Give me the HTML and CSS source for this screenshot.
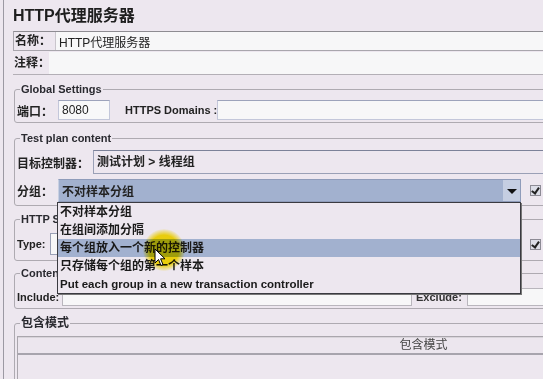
FILE: index.html
```html
<!DOCTYPE html>
<html lang="zh-CN">
<head>
    <meta charset="UTF-8">
    <title>HTTP代理服务器</title>
    <link rel="stylesheet" href="styles.css">
</head>
<body>
    <div class="window">
        <div class="editor">
            <h1 class="editor-title">HTTP代理服务器</h1>

            <div class="name-row">
                <label class="name-label">名称：</label>
                <div class="text-field">HTTP代理服务器</div>
            </div>
            <div class="comment-row">
                <label class="comment-label">注释：</label>
                <div class="text-field"></div>
            </div>

            <fieldset class="group group-global">
                <legend class="latin">Global Settings</legend>
                <div class="field-row">
                    <label class="port-label">端口：</label>
                    <div class="text-field port-field">8080</div>
                    <label class="https-label latin">HTTPS Domains :</label>
                    <div class="text-field grow"></div>
                </div>
            </fieldset>

            <fieldset class="group group-plan">
                <legend class="latin">Test plan content</legend>
                <div class="field-row target-row">
                    <label class="target-label">目标控制器：</label>
                    <div class="target-field">测试计划 &gt; 线程组</div>
                </div>
                <div class="field-row grouping-row">
                    <label class="grouping-label">分组：</label>
                    <div class="combo">
                        <span class="combo-value">不对样本分组</span>
                        <span class="combo-arrow"></span>
                    </div>
                    <span class="check"></span>
                </div>
            </fieldset>

            <fieldset class="group group-sampler">
                <legend class="latin">HTTP Sampler settings</legend>
                <div class="field-row">
                    <label class="type-label latin">Type:</label>
                    <div class="text-field type-field"></div>
                    <span class="check"></span>
                </div>
            </fieldset>

            <fieldset class="group group-content">
                <legend class="latin">Content-type filter</legend>
                <div class="field-row">
                    <label class="include-label latin">Include:</label>
                    <div class="text-field include-field"></div>
                    <label class="exclude-label latin">Exclude:</label>
                    <div class="text-field grow"></div>
                </div>
            </fieldset>

            <fieldset class="group group-patterns">
                <legend>包含模式</legend>
                <div class="pattern-table">
                    <div class="pattern-head">包含模式</div>
                    <div class="pattern-body"></div>
                </div>
            </fieldset>
        </div>

        <ul class="combo-popup">
            <li>不对样本分组</li>
            <li>在组间添加分隔</li>
            <li class="selected">每个组放入一个新的控制器</li>
            <li>只存储每个组的第一个样本</li>
            <li class="latin">Put each group in a new transaction controller</li>
        </ul>

        <div class="cursor-glow"></div>
        <svg class="cursor" width="12" height="19" viewBox="0 0 12 19">
            <path d="M1 1 L1 15 L4.5 11.5 L7 17.5 L9 16.6 L6.6 10.8 L11 10.8 Z" fill="#fff" stroke="#000" stroke-width="1"/>
        </svg>
    </div>
</body>
</html>
```

FILE: styles.css
```css
body {
    margin: 0;
    background: #ede7ef;
    font-family: "Liberation Sans", "Noto Sans CJK SC", sans-serif;
    font-size: 12px;
    font-weight: bold;
    color: #222;
    overflow: hidden;
}

label {
    white-space: nowrap;
    flex-shrink: 0;
}

.latin {
    font-size: 11px;
}

.window {
    position: relative;
    width: 843px;
    height: 379px;
    border-left: 1px solid #9c99a3;
    margin-left: 3px;
}

.editor {
    width: 820px;
    padding-left: 9px;
}

.editor-title {
    margin: 0;
    padding-top: 5px;
    line-height: 22px;
    font-size: 16px;
    font-weight: bold;
    color: #1e1e1e;
    margin-bottom: 4px;
}

.text-field {
    height: 100%;
    box-sizing: border-box;
    background: #f7f7f8;
    font-weight: normal;
    padding-left: 3px;
    display: flex;
    align-items: center;
}

.grow {
    flex: 1;
}

.name-row {
    display: flex;
    height: 20px;
    border: 1px solid #a9a6ad;
    border-top-color: #8e8c92;
    box-sizing: border-box;
}

.name-label {
    width: 40px;
    padding-left: 1px;
    line-height: 18px;
    border-right: 1px solid #c9c5cc;
}

.name-row .text-field {
    flex: 1;
}

.comment-row {
    display: flex;
    height: 22px;
    margin-top: 1px;
    border-bottom: 1px solid #b3afb6;
}

.comment-label {
    width: 35px;
    padding-left: 1px;
    line-height: 22px;
}

.comment-row .text-field {
    flex: 1;
}

.group {
    margin: 0 0 0 1px;
    padding: 0 2px;
    border: 1px solid #aeaab1;
    border-radius: 3px;
    min-width: 0;
}

.group legend {
    padding: 0 1px;
    margin-left: 3px;
    line-height: 14px;
    color: #2a2a30;
}

.field-row {
    display: flex;
    align-items: center;
}

.group-global {
    margin-top: 7px;
    padding-top: 4px;
    padding-bottom: 2px;
}

.group-global .field-row {
    height: 20px;
}

.port-label {
    width: 41px;
}

.port-field {
    width: 52px;
    border: 1px solid #c3c7da;
    border-top-color: #9da3bb;
    background: #f8f8f9;
}

.https-label {
    margin-left: 15px;
    width: 92px;
}

.group-global .grow {
    border: 1px solid #c3c7da;
    border-top-color: #9da3bb;
}

.group-plan {
    margin-top: 8px;
    padding-top: 5px;
    padding-bottom: 3px;
}

.target-row {
    height: 24px;
}

.target-label {
    width: 76px;
}

.target-field {
    flex: 1;
    height: 100%;
    box-sizing: border-box;
    border: 1px solid #9aa0b6;
    border-top-color: #7c8299;
    padding-left: 3px;
    line-height: 22px;
}

.grouping-row {
    height: 23px;
    margin-top: 5px;
}

.grouping-label {
    width: 41px;
}

.combo {
    width: 463px;
    height: 100%;
    box-sizing: border-box;
    display: flex;
    align-items: center;
    background: #a2b1cf;
    border: 1px solid #8f9cba;
    border-left-color: #c8d0e2;
}

.combo-value {
    flex: 1;
    padding-left: 3px;
}

.combo-arrow {
    width: 17px;
    height: 100%;
    background: #c5cee2;
    display: flex;
    align-items: center;
    justify-content: center;
}

.combo-arrow::after {
    content: "";
    border-left: 5px solid transparent;
    border-right: 5px solid transparent;
    border-top: 5px solid #111;
    margin-top: 1px;
}

.check {
    width: 9px;
    height: 9px;
    margin-left: 9px;
    border: 1px solid #8d8b95;
    background: #dcdde7;
    position: relative;
    flex-shrink: 0;
}

.check::after {
    content: "";
    position: absolute;
    left: 2px;
    top: 0;
    width: 3px;
    height: 6px;
    border-right: 2px solid #222;
    border-bottom: 2px solid #222;
    transform: rotate(35deg);
}

.group-sampler {
    margin-top: 6px;
    padding-top: 7px;
    padding-bottom: 5px;
}

.group-sampler .field-row {
    height: 22px;
}

.type-label {
    width: 33px;
}

.type-field {
    width: 471px;
    border: 1px solid #9aa0b6;
}

.group-content {
    margin-top: 5px;
    padding-top: 8px;
    padding-bottom: 2px;
}

.group-content .field-row {
    height: 18px;
}

.include-label {
    width: 45px;
}

.include-field {
    width: 350px;
    border: 1px solid #b9b6bd;
}

.exclude-label {
    width: 55px;
    padding-left: 4px;
    box-sizing: border-box;
    color: #333;
}

.group-content .grow {
    border: 1px solid #b9b6bd;
}

.group-patterns {
    margin-top: 7px;
    padding-top: 6px;
    padding-bottom: 0;
    height: 60px;
}

.pattern-table {
    border: 1px solid #aaa6ad;
    border-bottom: none;
    height: 60px;
}

.pattern-head {
    height: 15px;
    line-height: 15px;
    text-align: center;
    font-weight: normal;
    color: #444;
    border-top: 1px solid #d8d4da;
    border-bottom: 2px solid #a7a4ad;
    background: #ece6ee;
}

.combo-popup {
    position: absolute;
    left: 53px;
    top: 202px;
    width: 462px;
    margin: 0;
    padding: 0;
    list-style: none;
    background: #ede7ef;
    border: 1px solid #3a3a40;
    box-shadow: 1px 1px 0 #777;
}

.combo-popup li {
    height: 18px;
    line-height: 18px;
    padding-left: 2px;
    color: #1a1a1a;
}

.combo-popup li.latin {
    font-size: 11.5px;
}

.combo-popup li.selected {
    background: #a2b1cf;
}

.cursor-glow {
    position: absolute;
    left: 139px;
    top: 229px;
    width: 42px;
    height: 42px;
    border-radius: 50%;
    background: radial-gradient(circle, rgba(250, 225, 0, 0.95) 50%, rgba(250, 225, 0, 0) 72%);
    mix-blend-mode: multiply;
}

.cursor {
    position: absolute;
    left: 150px;
    top: 248px;
}
```
